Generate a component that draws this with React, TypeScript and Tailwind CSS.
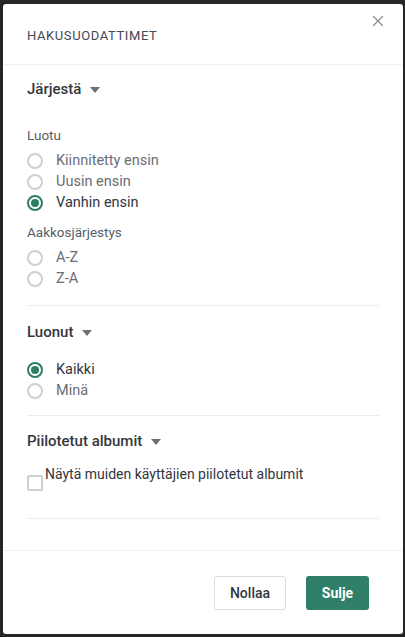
import { X } from "lucide-react";

const font = { fontFamily: "Roboto, 'Noto Sans', sans-serif" };

function Caret() {
  return (
    <svg width="10" height="6" viewBox="0 0 10 6" className="ml-[9px] mt-[1px]">
      <path d="M0 0 L10 0 L5 6 Z" fill="#6b6f76" />
    </svg>
  );
}

function Radio({ label, checked }: { label: string; checked?: boolean }) {
  return (
    <div className="flex h-[21px] items-center">
      {checked ? (
        <span className="flex h-[16px] w-[16px] items-center justify-center rounded-full border-2 border-[#2e7d67]">
          <span className="h-[8px] w-[8px] rounded-full bg-[#2e7d67]" />
        </span>
      ) : (
        <span className="h-[16px] w-[16px] rounded-full border-2 border-[#cfcfcf]" />
      )}
      <span className={`ml-[13px] text-[14.5px] ${checked ? "text-[#33363d]" : "text-[#6a6d74]"}`}>{label}</span>
    </div>
  );
}

function SectionTitle({ children }: { children: string }) {
  return (
    <div className="flex h-[20px] items-center text-[15px] font-medium text-[#33363d]">
      {children}
      <Caret />
    </div>
  );
}

export default function App() {
  return (
    <div className="h-[637px] w-[405px] bg-[#262628] pl-[3px] pt-[4px]" style={font}>
      <div className="flex h-[630px] w-[400px] flex-col overflow-hidden rounded-[3px] bg-white">
        <div className="relative flex h-[61px] items-center border-b border-[#f0f0f0] px-[24px]">
          <span className="mt-[3px] text-[13px] tracking-[0.6px] text-[#45484f]">HAKUSUODATTIMET</span>
          <X className="absolute right-[16px] top-[8px]" size={18} strokeWidth={1.6} color="#8a8a8a" />
        </div>

        <div className="px-[24px]">
          <div className="border-b border-[#ececec] pb-[16px] pt-[14px]">
            <SectionTitle>Järjestä</SectionTitle>
            <div className="mt-[27px] h-[18px] text-[13.5px] leading-[18px] text-[#5b5e65]">Luotu</div>
            <div className="mt-[6px]">
              <Radio label="Kiinnitetty ensin" />
              <Radio label="Uusin ensin" />
              <Radio label="Vanhin ensin" checked />
            </div>
            <div className="mt-[10px] h-[18px] text-[13.5px] leading-[18px] text-[#5b5e65]">Aakkosjärjestys</div>
            <div className="mt-[6px]">
              <Radio label="A-Z" />
              <Radio label="Z-A" />
            </div>
          </div>

          <div className="border-b border-[#ececec] pb-[14px] pt-[16px]">
            <SectionTitle>Luonut</SectionTitle>
            <div className="mt-[17px]">
              <Radio label="Kaikki" checked />
              <Radio label="Minä" />
            </div>
          </div>

          <div className="border-b border-[#ececec] pb-[27px] pt-[15px]">
            <SectionTitle>Piilotetut albumit</SectionTitle>
            <div className="mt-[13px] flex items-start">
              <span className="mt-[11px] h-[16px] w-[16px] rounded-[2px] border-2 border-[#cfcfcf]" />
              <span className="ml-[2px] text-[14px] leading-[20px] text-[#33363d]">Näytä muiden käyttäjien piilotetut albumit</span>
            </div>
          </div>
        </div>

        <div className="mt-[31px] flex flex-1 items-start justify-end gap-[20px] border-t border-[#f0f0f0] pr-[34px] pt-[25px]">
          <button className="h-[34px] w-[72px] rounded-[3px] border border-[#dcdcdc] bg-white text-[14px] font-medium text-[#33363d]">
            Nollaa
          </button>
          <button className="h-[34px] w-[63px] rounded-[3px] bg-[#2f7f69] text-[14px] font-bold text-white">
            Sulje
          </button>
        </div>
      </div>
    </div>
  );
}
